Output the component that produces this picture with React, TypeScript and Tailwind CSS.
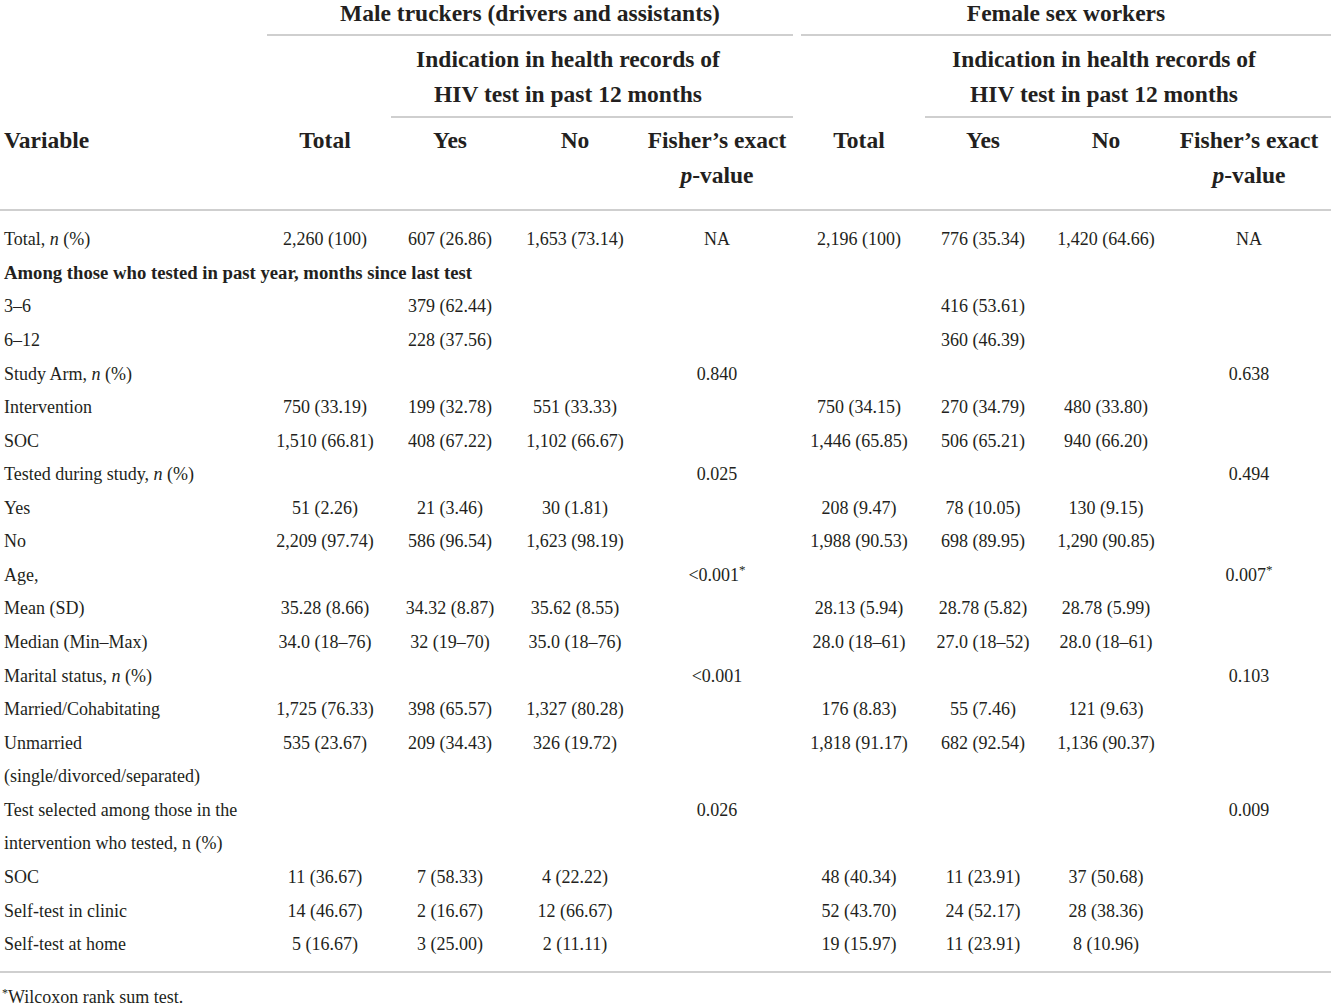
import type { ReactNode } from "react";

const COLS =
  "grid grid-cols-[263px_124px_126px_124px_160px_124px_124px_122px_164px]";

type Row = {
  label: ReactNode;
  cells?: string[];
  heading?: boolean;
};

const n = <i>n</i>;

const rows: Row[] = [
  {
    label: <>Total, {n} (%)</>,
    cells: ["2,260 (100)", "607 (26.86)", "1,653 (73.14)", "NA", "2,196 (100)", "776 (35.34)", "1,420 (64.66)", "NA"],
  },
  { label: "Among those who tested in past year, months since last test", heading: true },
  { label: "3–6", cells: ["", "379 (62.44)", "", "", "", "416 (53.61)", "", ""] },
  { label: "6–12", cells: ["", "228 (37.56)", "", "", "", "360 (46.39)", "", ""] },
  { label: <>Study Arm, {n} (%)</>, cells: ["", "", "", "0.840", "", "", "", "0.638"] },
  {
    label: "Intervention",
    cells: ["750 (33.19)", "199 (32.78)", "551 (33.33)", "", "750 (34.15)", "270 (34.79)", "480 (33.80)", ""],
  },
  {
    label: "SOC",
    cells: ["1,510 (66.81)", "408 (67.22)", "1,102 (66.67)", "", "1,446 (65.85)", "506 (65.21)", "940 (66.20)", ""],
  },
  { label: <>Tested during study, {n} (%)</>, cells: ["", "", "", "0.025", "", "", "", "0.494"] },
  {
    label: "Yes",
    cells: ["51 (2.26)", "21 (3.46)", "30 (1.81)", "", "208 (9.47)", "78 (10.05)", "130 (9.15)", ""],
  },
  {
    label: "No",
    cells: ["2,209 (97.74)", "586 (96.54)", "1,623 (98.19)", "", "1,988 (90.53)", "698 (89.95)", "1,290 (90.85)", ""],
  },
  { label: "Age,", cells: ["", "", "", "<0.001*", "", "", "", "0.007*"] },
  {
    label: "Mean (SD)",
    cells: ["35.28 (8.66)", "34.32 (8.87)", "35.62 (8.55)", "", "28.13 (5.94)", "28.78 (5.82)", "28.78 (5.99)", ""],
  },
  {
    label: "Median (Min–Max)",
    cells: ["34.0 (18–76)", "32 (19–70)", "35.0 (18–76)", "", "28.0 (18–61)", "27.0 (18–52)", "28.0 (18–61)", ""],
  },
  { label: <>Marital status, {n} (%)</>, cells: ["", "", "", "<0.001", "", "", "", "0.103"] },
  {
    label: "Married/Cohabitating",
    cells: ["1,725 (76.33)", "398 (65.57)", "1,327 (80.28)", "", "176 (8.83)", "55 (7.46)", "121 (9.63)", ""],
  },
  {
    label: "Unmarried",
    cells: ["535 (23.67)", "209 (34.43)", "326 (19.72)", "", "1,818 (91.17)", "682 (92.54)", "1,136 (90.37)", ""],
  },
  { label: "(single/divorced/separated)" },
  { label: "Test selected among those in the", cells: ["", "", "", "0.026", "", "", "", "0.009"] },
  { label: "intervention who tested, n (%)" },
  {
    label: "SOC",
    cells: ["11 (36.67)", "7 (58.33)", "4 (22.22)", "", "48 (40.34)", "11 (23.91)", "37 (50.68)", ""],
  },
  {
    label: "Self-test in clinic",
    cells: ["14 (46.67)", "2 (16.67)", "12 (66.67)", "", "52 (43.70)", "24 (52.17)", "28 (38.36)", ""],
  },
  {
    label: "Self-test at home",
    cells: ["5 (16.67)", "3 (25.00)", "2 (11.11)", "", "19 (15.97)", "11 (23.91)", "8 (10.96)", ""],
  },
];

// trailing asterisk goes up as a footnote mark
function Value({ v }: { v: string }) {
  if (v.endsWith("*")) {
    return (
      <>
        {v.slice(0, -1)}
        <sup className="text-[13px]">*</sup>
      </>
    );
  }
  return <>{v}</>;
}

function Indication() {
  return (
    <div className="h-[82px] pl-[4px]">
      <div className="h-full border-b-2 border-[#cfcfcf] pt-[6px] pr-[48px] text-center leading-[35px]">
        Indication in health records of
        <br />
        HIV test in past 12 months
      </div>
    </div>
  );
}

export default function App() {
  return (
    <div className="w-[1331px] h-[1008px] bg-white text-[#231f20] font-['Liberation_Serif',serif] overflow-hidden">
      {/* header */}
      <div className="text-[23.5px] font-bold">
        <div className={COLS}>
          <div />
          <div className="col-span-4 h-[36px] px-[4px]">
            <div className="h-full border-b-2 border-[#cfcfcf] text-center leading-[26px]">
              Male truckers (drivers and assistants)
            </div>
          </div>
          <div className="col-span-4 h-[36px] pl-[4px]">
            <div className="h-full border-b-2 border-[#cfcfcf] text-center leading-[26px]">
              Female sex workers
            </div>
          </div>
        </div>
        <div className={COLS}>
          <div className="col-span-2" />
          <div className="col-span-3 pr-[4px]">
            <Indication />
          </div>
          <div />
          <div className="col-span-3">
            <Indication />
          </div>
        </div>
        <div className={`${COLS} h-[93px] border-b-2 border-[#cfcfcf] pt-[5px] leading-[35px] text-center`}>
          <div className="pl-[4px] text-left">Variable</div>
          <div>Total</div>
          <div>Yes</div>
          <div>No</div>
          <div>
            Fisher’s exact
            <br />
            <i>p</i>-value
          </div>
          <div>Total</div>
          <div>Yes</div>
          <div>No</div>
          <div>
            Fisher’s exact
            <br />
            <i>p</i>-value
          </div>
        </div>
      </div>

      {/* body */}
      <div className="pt-[12px] pb-[10px] border-b-2 border-[#cfcfcf] text-[18px]">
        {rows.map((row, i) =>
          row.heading ? (
            <div key={i} className="h-[33.57px] flex items-center pl-[4px] font-bold text-[18.7px]">
              {row.label}
            </div>
          ) : (
            <div key={i} className={`${COLS} h-[33.57px] items-center text-center`}>
              <div className="pl-[4px] text-left whitespace-nowrap">{row.label}</div>
              {(row.cells ?? ["", "", "", "", "", "", "", ""]).map((c, j) => (
                <div key={j} className="whitespace-nowrap">
                  <Value v={c} />
                </div>
              ))}
            </div>
          )
        )}
      </div>

      <div className="pt-[14px] pl-[2px] text-[18px] leading-[20px]">
        <sup className="text-[12px]">*</sup>Wilcoxon rank sum test.
      </div>
    </div>
  );
}
